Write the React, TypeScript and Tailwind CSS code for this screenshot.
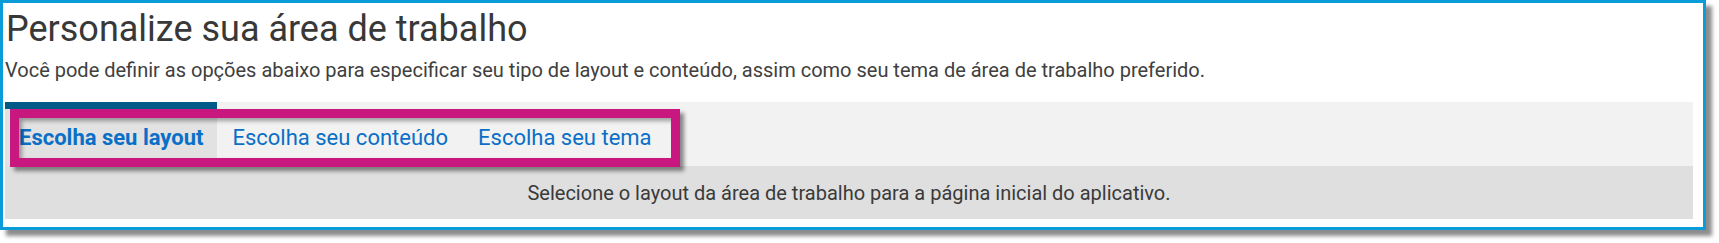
import React from 'react';

const tabs = ['Escolha seu layout', 'Escolha seu conteúdo', 'Escolha seu tema'];

export default function App() {
    const active = 0;

    return (
        <div className="bg-white w-[1719px] h-[243px] font-['Roboto',sans-serif]">
            <div className="relative w-[1706px] h-[230px] bg-white border-[3px] border-[#0a9bd9] shadow-[6px_6px_4px_rgba(0,0,0,0.45)] pl-[2px] pr-[10px] pt-[6px] flex flex-col">
                <h1 className="text-[36px] leading-[40px] text-[#383838] pl-[1px]">Personalize sua área de trabalho</h1>
                <p className="mt-[9px] text-[20px] leading-[24px] text-[#404040]">
                    Você pode definir as opções abaixo para especificar seu tipo de layout e conteúdo, assim como seu tema de área de trabalho preferido.
                </p>

                <div className="mt-[20px] flex flex-col">
                    <div className="flex h-[64px] bg-[#f2f2f2]">
                        {tabs.map((tab, i) => (
                            <div
                                key={tab}
                                className={
                                    i === active
                                        ? 'flex items-center px-[14px] bg-[#e2e2e2] border-t-[7px] border-[#005a87] text-[22px] font-bold text-[#0a6fc6]'
                                        : 'flex items-center px-[15px] pt-[7px] text-[22px] text-[#0a6fc6]'
                                }
                            >
                                {tab}
                            </div>
                        ))}
                    </div>
                    <div className="h-[53px] bg-[#dfdfdf] flex items-center justify-center text-[20px] text-[#3a3a3a]">
                        Selecione o layout da área de trabalho para a página inicial do aplicativo.
                    </div>
                </div>

                {/* destaque rosa sobre as abas */}
                <div className="absolute left-[7px] top-[106px] w-[670px] h-[58px] border-[9px] border-[#c8177f] shadow-[4px_4px_4px_rgba(0,0,0,0.45),inset_3px_3px_4px_rgba(0,0,0,0.35)]" />
            </div>
        </div>
    );
}
